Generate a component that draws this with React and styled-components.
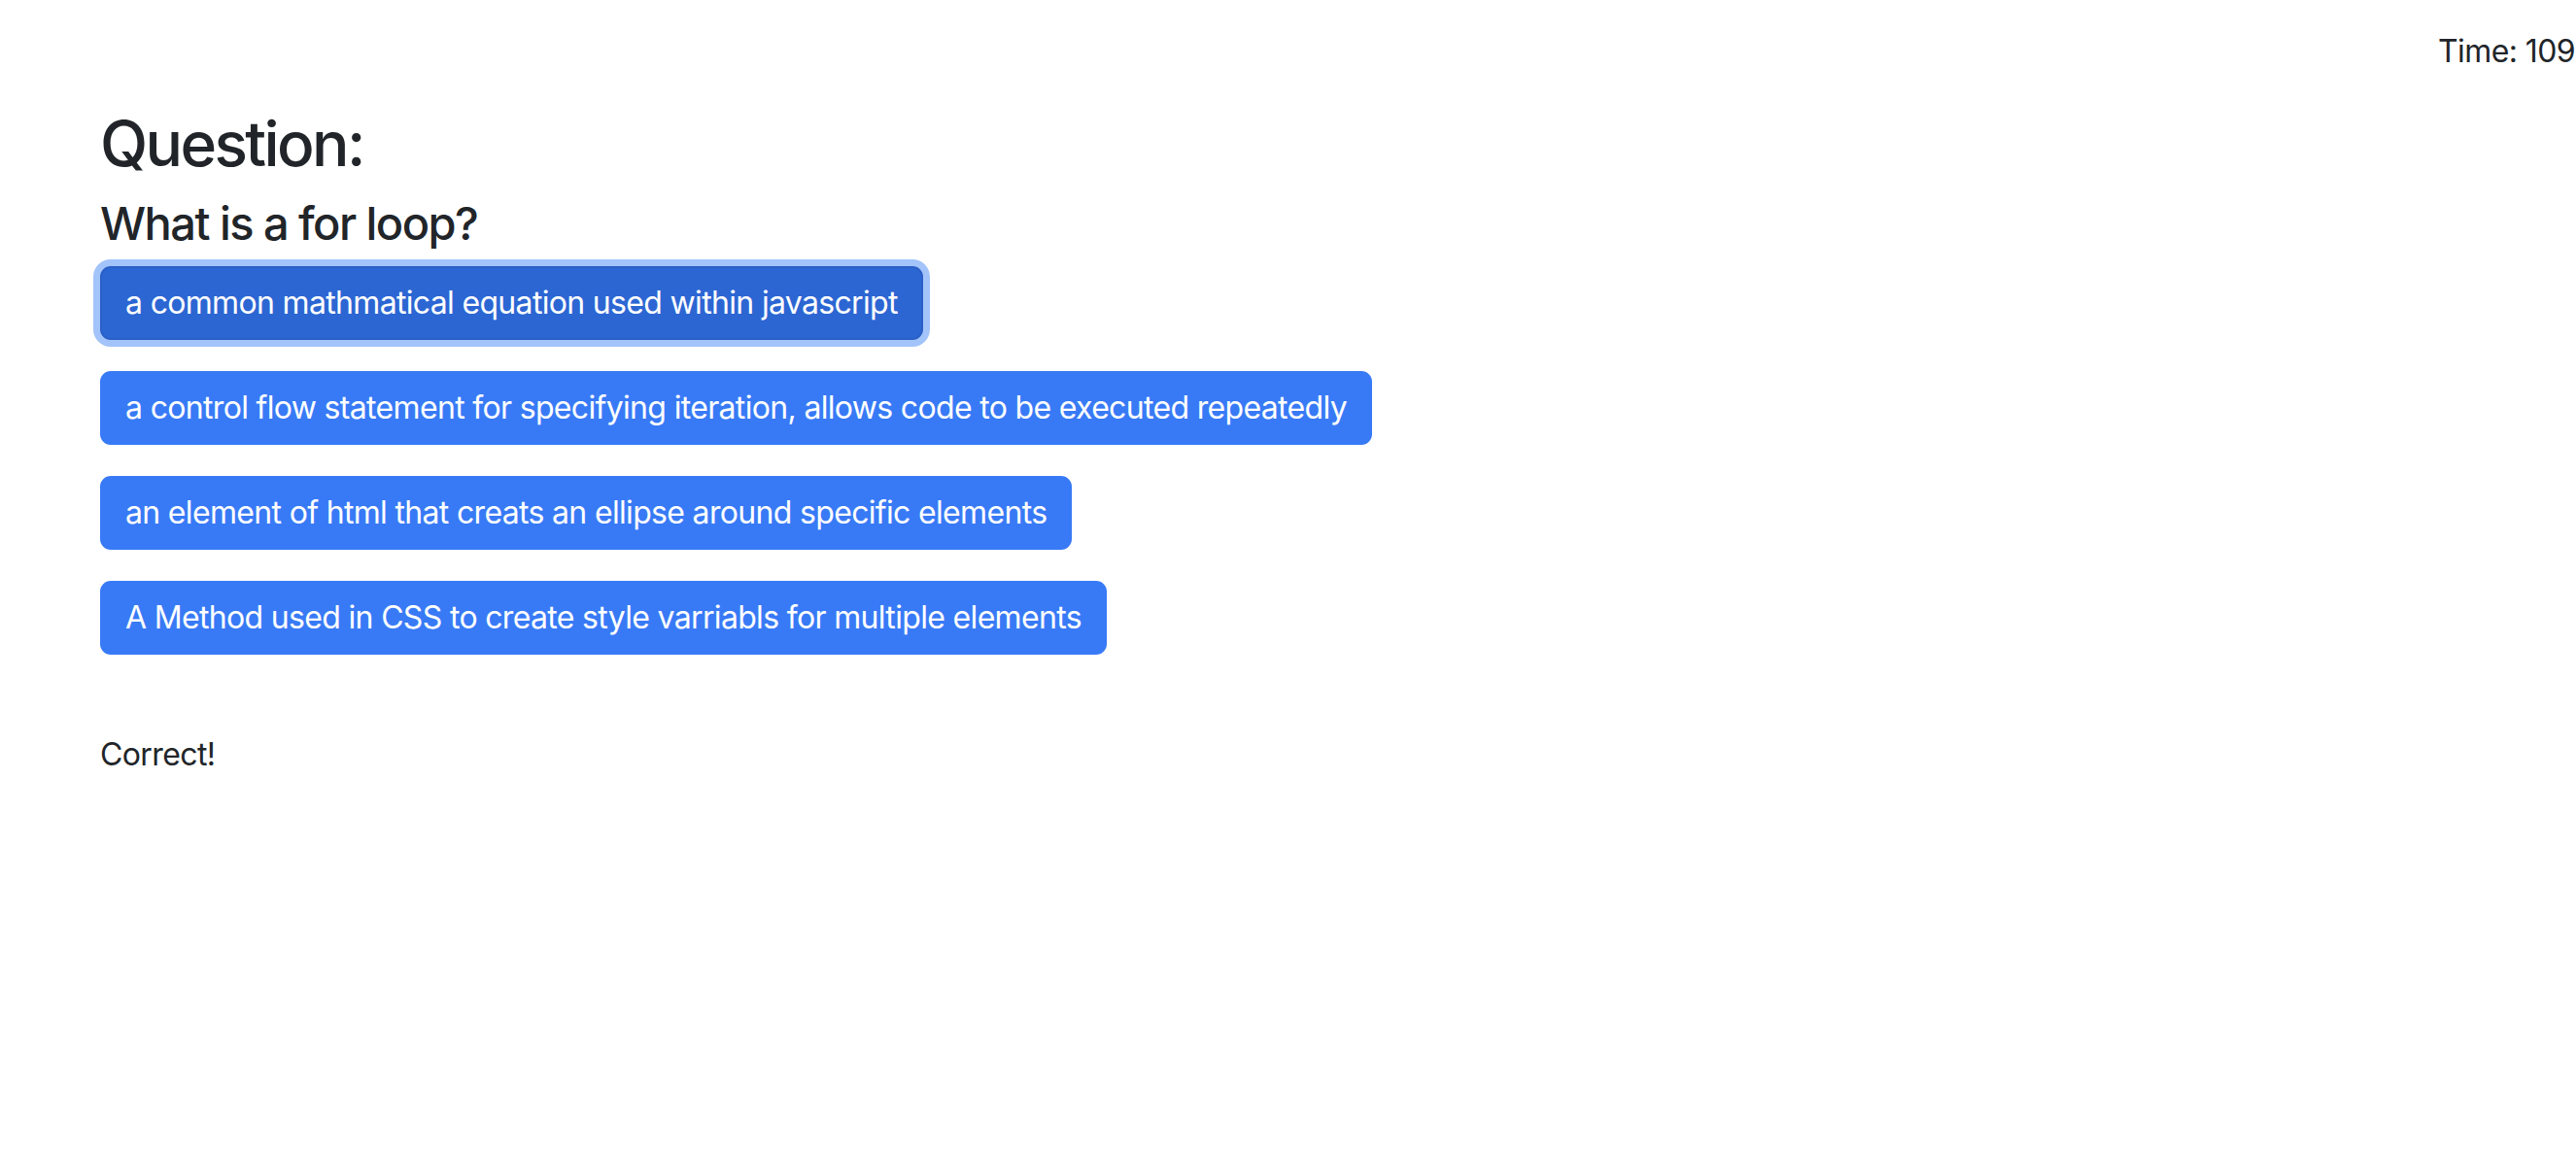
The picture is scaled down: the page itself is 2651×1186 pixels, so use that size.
import React from "react";
import styled, { createGlobalStyle } from "styled-components";

const GlobalStyle = createGlobalStyle`
  html, body {
    margin: 0;
    padding: 0;
    background: #ffffff;
  }
  body {
    font-family: Inter, "Noto Sans", "Liberation Sans", sans-serif;
    color: #212529;
  }
  * { box-sizing: border-box; }
`;

const Page = styled.div`
  display: flex;
  flex-direction: column;
`;

const TimerBar = styled.div`
  text-align: right;
  font-size: 32px;
  line-height: 48px;
  letter-spacing: -0.6px;
  margin-top: 29px;
  padding-right: 1px;
`;

const Main = styled.main`
  display: flex;
  flex-direction: column;
  align-items: flex-start;
  padding-left: 103px;
`;

const Title = styled.h1`
  font-size: 64px;
  font-weight: 500;
  line-height: 76.8px;
  letter-spacing: -2.6px;
  margin: 33px 0 0;
`;

const QuestionText = styled.h4`
  font-size: 47px;
  font-weight: 500;
  line-height: 56.4px;
  letter-spacing: -1.55px;
  margin: 15px 0 0;
`;

const Choices = styled.div`
  display: flex;
  flex-direction: column;
  align-items: flex-start;
  gap: 32px;
  margin-top: 16px;
`;

const ChoiceButton = styled.button`
  font-family: inherit;
  font-size: 32px;
  line-height: 48px;
  font-weight: 400;
  letter-spacing: -0.67px;
  padding: 12px 24px;
  border-radius: 11px;
  color: #ffffff;
  cursor: pointer;
  border: 2px solid ${(p) => (p.$focused ? "#2a5fc6" : "#387af6")};
  background: ${(p) => (p.$focused ? "#2c66d3" : "#387af6")};
  box-shadow: ${(p) => (p.$focused ? "0 0 0 7px #a2c4fa" : "none")};
`;

const Feedback = styled.p`
  font-size: 32px;
  line-height: 48px;
  letter-spacing: -0.6px;
  margin: 79px 0 0;
`;

const choices = [
  "a common mathmatical equation used within javascript",
  "a control flow statement for specifying iteration, allows code to be executed repeatedly",
  "an element of html that creats an ellipse around specific elements",
  "A Method used in CSS to create style varriabls for multiple elements",
];

export default function App() {
  return (
    <>
      <GlobalStyle />
      <Page>
        <TimerBar>Time: 109</TimerBar>
        <Main>
          <Title>Question:</Title>
          <QuestionText>What is a for loop?</QuestionText>
          <Choices>
            {choices.map((c, i) => (
              <ChoiceButton key={i} $focused={i === 0}>
                {c}
              </ChoiceButton>
            ))}
          </Choices>
          <Feedback>Correct!</Feedback>
        </Main>
      </Page>
    </>
  );
}
